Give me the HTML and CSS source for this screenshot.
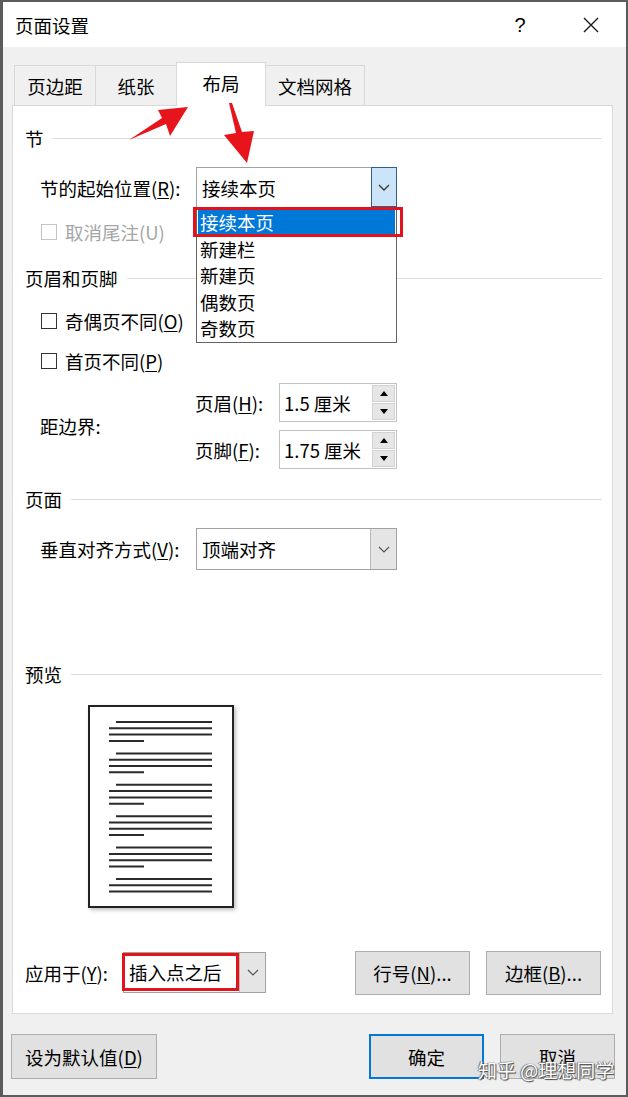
FILE: index.html
```html
<!DOCTYPE html>
<html lang="zh-CN">
<head>
<meta charset="UTF-8">
<meta name="viewport" content="width=device-width, initial-scale=1.0">
<title>页面设置</title>
<link rel="stylesheet" href="styles.css">
</head>
<body>
<div class="window">
  <div class="titlebar">
    <span class="title">页面设置</span>
    <span class="help">?</span>
    <svg class="close" width="16" height="16" viewBox="0 0 16 16"><path d="M1 1L15 15M15 1L1 15" stroke="#1a1a1a" stroke-width="1.4" fill="none"/></svg>
  </div>

  <div class="client">
    <div class="tabs">
      <div class="tab">页边距</div>
      <div class="tab">纸张</div>
      <div class="tab active">布局</div>
      <div class="tab">文档网格</div>
    </div>

    <div class="panel">
      <div class="sect s-section">节</div>

      <div class="field f-start">
        <span class="field-label">节的起始位置(<u>R</u>):</span>
        <div class="combo open">
          <span class="combo-text">接续本页</span>
          <span class="combo-btn"><svg width="12" height="7" viewBox="0 0 12 7"><path d="M1 1L6 6L11 1" stroke="#3a3a3a" stroke-width="1.4" fill="none"/></svg></span>
          <ul class="dropdown">
            <li class="selected">接续本页</li>
            <li>新建栏</li>
            <li>新建页</li>
            <li>偶数页</li>
            <li>奇数页</li>
            <span class="hl"></span>
          </ul>
        </div>
      </div>

      <div class="check disabled f-endnote">
        <span class="box"></span><span>取消尾注(U)</span>
      </div>

      <div class="sect s-header">页眉和页脚</div>

      <div class="check c-odd">
        <span class="box"></span><span>奇偶页不同(<u>O</u>)</span>
      </div>
      <div class="check c-first">
        <span class="box"></span><span>首页不同(<u>P</u>)</span>
      </div>

      <div class="margins">
        <span class="margins-label">距边界:</span>
        <div class="spin-col">
          <div class="spin-row">
            <span class="spin-label">页眉(<u>H</u>):</span>
            <div class="spin">
              <span>1.5 厘米</span>
              <span class="spin-btns"><span class="sb"><i class="up"></i></span><span class="sb"><i class="down"></i></span></span>
            </div>
          </div>
          <div class="spin-row">
            <span class="spin-label">页脚(<u>F</u>):</span>
            <div class="spin">
              <span>1.75 厘米</span>
              <span class="spin-btns"><span class="sb"><i class="up"></i></span><span class="sb"><i class="down"></i></span></span>
            </div>
          </div>
        </div>
      </div>

      <div class="sect s-page">页面</div>

      <div class="field f-valign">
        <span class="field-label">垂直对齐方式(<u>V</u>):</span>
        <div class="combo tall">
          <span class="combo-text">顶端对齐</span>
          <span class="combo-btn"><svg width="12" height="7" viewBox="0 0 12 7"><path d="M1 1L6 6L11 1" stroke="#555" stroke-width="1.2" fill="none"/></svg></span>
        </div>
      </div>

      <div class="sect s-preview">预览</div>

      <div class="page">
        <svg width="142" height="199" viewBox="0 0 142 199">
          <g stroke="#2b2b2b" stroke-width="2">
            <path d="M26 15H122M19 21.3H122M19 27.6H122M19 33.9H54"/>
            <path d="M26 46.4H122M19 52.7H122M19 59H122M19 65.3H54"/>
            <path d="M26 77.8H122M19 84.1H122M19 90.4H122M19 96.7H54"/>
            <path d="M26 109.2H122M19 115.5H122M19 121.8H122M19 128.1H54"/>
            <path d="M26 140.6H122M19 146.9H122M19 153.2H122M19 159.5H54"/>
            <path d="M26 172H122M19 178.3H122M19 184.6H122"/>
          </g>
        </svg>
      </div>

      <div class="apply">
        <span class="apply-label">应用于(<u>Y</u>):</span>
        <div class="combo apply-combo">
          <span class="combo-text marked">插入点之后</span>
          <span class="combo-btn"><svg width="12" height="7" viewBox="0 0 12 7"><path d="M1 1L6 6L11 1" stroke="#555" stroke-width="1.2" fill="none"/></svg></span>
        </div>
        <span class="spacer"></span>
        <button class="btn short">行号(<u>N</u>)...</button>
        <button class="btn short">边框(<u>B</u>)...</button>
      </div>
    </div>

    <div class="footer">
      <button class="btn wide">设为默认值(<u>D</u>)</button>
      <span class="spacer"></span>
      <button class="btn primary">确定</button>
      <button class="btn">取消</button>
    </div>
  </div>

  <!-- annotation arrows drawn over the dialog -->
  <svg class="annot" width="628" height="1097" viewBox="0 0 628 1097">
    <polygon points="188,107 158,110 162,118 129,140 166,124 170,136" fill="#e8141c"/>
    <polygon points="229,103 232,103 242,132 254,131 247,163 224,135 236,133" fill="#e8141c"/>
  </svg>
  <div class="watermark">知乎 @理想同学</div>
</div>
</body>
</html>
```

FILE: styles.css
```css
* {
  box-sizing: border-box;
}
html, body {
  margin: 0;
}
body {
  font-family: "Noto Sans CJK SC", "Noto Sans", sans-serif;
  font-size: 18.5px;
  line-height: 24px;
  color: #000;
  background: #f0f0f0;
}
u {
  text-decoration-thickness: 1px;
  text-underline-offset: 2px;
}

/* window frame */
.window {
  position: relative;
  width: 628px;
  height: 1097px;
  border: 2px solid #5b5b5b;
  border-left-width: 3px;
  display: flex;
  flex-direction: column;
  background: #f0f0f0;
}
.titlebar {
  height: 45px;
  background: #fff;
  display: flex;
  align-items: center;
  padding-left: 12px;
}
.title {
  flex: 1;
}
.help {
  width: 16px;
  text-align: center;
  font-family: "Liberation Sans", sans-serif;
  font-size: 20px;
  margin-right: 55px;
}
.close {
  margin-right: 27px;
}
.client {
  flex: 1;
  padding: 0 13px 0 9px;
  display: flex;
  flex-direction: column;
}

/* tabs */
.tabs {
  display: flex;
  align-items: flex-end;
  height: 40px;
  margin-top: 18px;
  padding-left: 2px;
  position: relative;
  z-index: 2;
}
.tab {
  height: 40px;
  min-width: 82px;
  padding: 0 12px;
  border: 1px solid #d9d9d9;
  border-bottom: none;
  margin-right: -1px;
  display: flex;
  align-items: center;
  justify-content: center;
  background: #f0f0f0;
}
.tab.active {
  height: 44px;
  min-width: 90px;
  margin-bottom: -1px;
  background: #fff;
  position: relative;
  z-index: 3;
  padding-bottom: 3px;
}

/* tab page */
.panel {
  position: relative;
  z-index: 1;
  background: #fff;
  border: 1px solid #d9d9d9;
  padding: 0 10px 19px 0;
}
.sect {
  display: flex;
  align-items: center;
  height: 24px;
  padding-left: 12px;
  gap: 9px;
}
.sect::after {
  content: "";
  flex: 1;
  height: 1px;
  background: #dcdcdc;
}
.s-section { margin-top: 20px; }
.f-start { margin-top: 17px; }
.f-endnote { margin-top: 12px; }
.s-header { margin-top: 22px; }
.c-odd { margin-top: 19px; }
.c-first { margin-top: 16px; }
.margins { margin-top: 10px; }
.s-page { margin-top: 18px; }
.f-valign { margin-top: 17px; }
.s-preview { margin-top: 92px; }
.page { margin-top: 19px; }
.apply { margin-top: 43px; }

.field {
  display: flex;
  align-items: center;
  padding-left: 27px;
}
.field-label {
  width: 156px;
}

/* combo boxes */
.combo {
  position: relative;
  display: flex;
  width: 201px;
  height: 41px;
  border: 1px solid #a2a2a2;
  background: #fff;
}
.combo.tall {
  height: 42px;
}
.combo-text {
  flex: 1;
  padding-left: 5px;
  display: flex;
  align-items: center;
}
.combo-btn {
  width: 26px;
  display: flex;
  align-items: center;
  justify-content: center;
  background: #e5e5e5;
  border-left: 1px solid #b9b9b9;
}
.combo.open .combo-btn {
  background: #cce4f7;
  border: 1px solid #2f5f8f;
  margin: -1px -1px 0 0;
}
.dropdown {
  position: absolute;
  left: -1px;
  top: 39px;
  width: 201px;
  height: 136px;
  margin: 0;
  padding: 1px 0 0;
  list-style: none;
  border: 1px solid #646464;
  background: #fff;
  z-index: 5;
}
.dropdown li {
  height: 26.5px;
  line-height: 26.5px;
  padding-left: 3px;
}
.dropdown li.selected {
  background: #0078d7;
  color: #fff;
  margin: 0 1px;
  padding-left: 2px;
}
.dropdown .hl {
  position: absolute;
  left: -4px;
  top: -1px;
  width: 210px;
  height: 30px;
  border: 3px solid #e3121c;
}

/* check boxes */
.check {
  display: flex;
  align-items: center;
  gap: 8px;
  height: 24px;
  padding-left: 28px;
}
.box {
  width: 16px;
  height: 16px;
  border: 1px solid #333;
  background: #fff;
}
.check.disabled {
  color: #a6a6a6;
}
.check.disabled .box {
  border-color: #c4c4c4;
}

/* header / footer distance */
.margins {
  display: flex;
  align-items: center;
  padding-left: 27px;
}
.margins-label {
  width: 155px;
}
.spin-col {
  display: flex;
  flex-direction: column;
  gap: 8px;
}
.spin-row {
  display: flex;
  align-items: center;
  height: 39px;
}
.spin-label {
  width: 84px;
}
.spin {
  width: 118px;
  height: 39px;
  border: 1px solid #c3c3c3;
  background: #fff;
  display: flex;
  align-items: center;
  padding-left: 4px;
}
.spin-btns {
  margin-left: auto;
  margin-right: 1px;
  width: 23px;
  height: 35px;
  display: flex;
  flex-direction: column;
  gap: 1px;
}
.sb {
  flex: 1;
  background: #e6e6e6;
  border: 1px solid #d2d2d2;
  display: flex;
  align-items: center;
  justify-content: center;
}
.sb i {
  width: 0;
  height: 0;
  border-left: 4px solid transparent;
  border-right: 4px solid transparent;
}
.sb .up {
  border-bottom: 5px solid #000;
}
.sb .down {
  border-top: 5px solid #000;
}

/* preview page */
.page {
  margin-left: 75px;
  width: 146px;
  height: 203px;
  border: 2px solid #222;
  background: #fff;
  box-shadow: 2px 2px 4px rgba(0, 0, 0, 0.25);
}
.page svg {
  display: block;
}

/* apply row and buttons */
.apply {
  display: flex;
  align-items: center;
  height: 43px;
  padding-left: 12px;
  padding-right: 1px;
}
.apply-label {
  width: 98px;
}
.apply-combo {
  width: 143px;
}
.combo-text.marked {
  border: 3px solid #e3121c;
  margin: 0 0 1px -2px;
  padding-left: 4px;
}
.spacer {
  flex: 1;
}
.btn {
  height: 45px;
  width: 115px;
  padding: 0;
  font: inherit;
  color: #000;
  background: #e1e1e1;
  border: 1px solid #adadad;
}
.btn.short {
  height: 44px;
  margin-left: 16px;
}
.btn.wide {
  width: 146px;
}
.btn.primary {
  border: 2px solid #0078d7;
}
.footer {
  display: flex;
  gap: 16px;
  margin: 20px -2px 0 -1px;
}

/* overlays */
.annot {
  position: absolute;
  left: -3px;
  top: -2px;
  pointer-events: none;
  z-index: 10;
}
.watermark {
  position: absolute;
  left: 475px;
  top: 1055px;
  font-size: 19px;
  line-height: 26px;
  color: #fff;
  text-shadow: 0 0 1px #555, 1px 1px 1px #444, -1px 0 1px #777;
  z-index: 11;
}
```
